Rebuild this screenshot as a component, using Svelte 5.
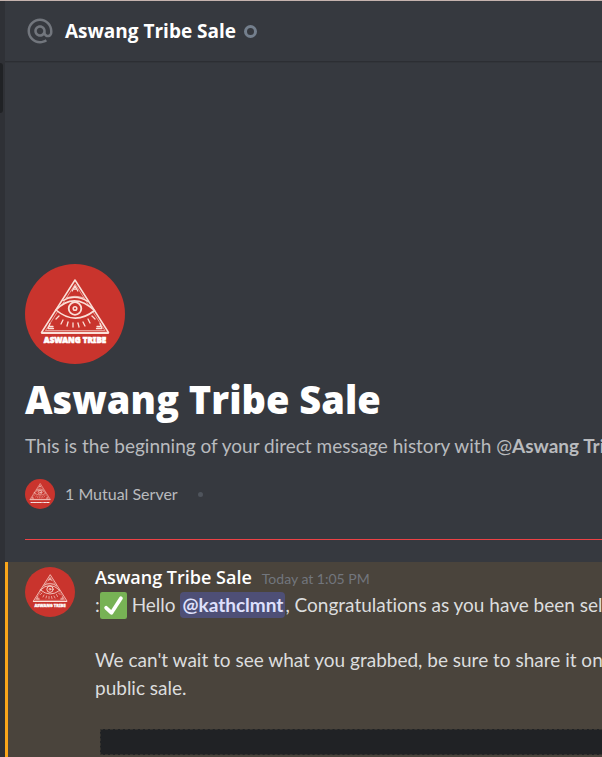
<script lang="ts">
	interface Message {
		author: string;
		time: string;
		mention: string;
	}

	const user = 'Aswang Tribe Sale';
	const mutualServers = 1;
	const message: Message = {
		author: user,
		time: 'Today at 1:05 PM',
		mention: '@kathclmnt'
	};

	// x1, y1, x2, y2 of each lower lash
	const lashes = [
		[34, 52, 31, 55],
		[38, 56, 36, 60],
		[43, 58, 42, 62],
		[48, 59, 48, 63],
		[53, 59, 54, 63],
		[58, 58, 60, 62],
		[63, 55, 65, 59],
		[67, 52, 70, 55]
	];
</script>

{#snippet logo()}
	<svg class="logo" viewBox="0 0 100 100" aria-hidden="true">
		<circle cx="50" cy="50" r="50" fill="#c9342d" />
		<g fill="none" stroke="#fbe0d8" stroke-width="1.3" stroke-linejoin="round" stroke-linecap="round">
			<path d="M50 16 16.5 68.5h67z" stroke-width="1.5" />
			<path d="M50 20.5 20.5 66.5h59z" stroke-width="0.6" />
			<path d="M17 69h66" stroke-width="2" />
			<path d="M47.2 27 50 21.8 52.8 27M48.2 25.2h3.6" />
			<path d="M38 36.5Q50 29.5 63 37.5" />
			<path d="M41 34Q50 30.5 59 34" stroke-width="0.7" />
			<path d="M31 46Q49 27.5 69.5 46.5Q50 62 31 46Z" fill="#c9342d" stroke-width="1.6" />
			<circle cx="50" cy="44.5" r="6.3" stroke-width="1.8" />
			<circle cx="50" cy="44.5" r="1.8" stroke-width="1.5" />
			{#each lashes as [x1, y1, x2, y2]}
				<path d="M{x1} {y1}L{x2} {y2}" />
			{/each}
			<path d="M25 59.5 23 64.5h5.5M25 62.5h3" />
			<path d="M75 59.5 77 64.5h-5.5M75 62.5h-3" />
		</g>
		<text x="50" y="79" text-anchor="middle">ASWANG TRIBE</text>
	</svg>
{/snippet}

<div class="app">
	<aside class="sidebar"><div class="scroll-thumb"></div></aside>
	<main class="chat">
		<header class="topbar">
			<svg class="at" viewBox="0 0 24 24" aria-hidden="true">
				<path
					fill="currentColor"
					d="M12 2C6.486 2 2 6.486 2 12C2 17.515 6.486 22 12 22C14.039 22 15.993 21.398 17.652 20.259L16.521 18.611C15.195 19.519 13.633 20 12 20C7.589 20 4 16.411 4 12C4 7.589 7.589 4 12 4C16.411 4 20 7.589 20 12V12.782C20 14.17 19.402 15 18.4 15L18.398 15.018C18.338 15.005 18.273 15 18.209 15H18C17.437 15 16.6 14.182 16.6 13.631V12C16.6 9.464 14.537 7.4 12 7.4C9.463 7.4 7.4 9.463 7.4 12C7.4 14.537 9.463 16.6 12 16.6C13.234 16.6 14.35 16.106 15.177 15.313C15.826 16.269 16.93 17 18 17L18.002 16.981C18.064 16.994 18.129 17 18.195 17H18.4C20.552 17 22 15.306 22 12.782V12C22 6.486 17.514 2 12 2ZM12 14.599C10.566 14.599 9.4 13.433 9.4 11.999C9.4 10.565 10.566 9.399 12 9.399C13.434 9.399 14.6 10.565 14.6 11.999C14.6 13.433 13.434 14.599 12 14.599Z"
				/>
			</svg>
			<span class="topbar-name">{user}</span>
			<span class="status" role="img" aria-label="Offline"></span>
		</header>

		<section class="intro">
			<div class="avatar large">{@render logo()}</div>
			<h1>{user}</h1>
			<p class="history">
				This is the beginning of your direct message history with @<strong>{user}</strong>.
			</p>
			<div class="mutual">
				<div class="avatar small">{@render logo()}</div>
				<span>{mutualServers} Mutual Server</span>
				<span class="dot"></span>
			</div>
		</section>

		<hr />

		<article class="message">
			<div class="avatar medium">{@render logo()}</div>
			<div class="body">
				<div class="meta">
					<h2>{message.author}</h2>
					<time>{message.time}</time>
				</div>
				<p>
					:<svg class="emoji" viewBox="0 0 36 36" role="img" aria-label="check mark">
						<rect width="36" height="36" rx="3" fill="#77b255" />
						<path
							fill="#fff"
							d="M29.28 6.362a2.502 2.502 0 0 0-3.458.736L14.936 23.877l-5.029-4.65a2.5 2.5 0 1 0-3.394 3.671l7.209 6.666c.48.445 1.09.665 1.696.665.673 0 1.534-.282 2.099-1.139.332-.506 12.5-19.27 12.5-19.27a2.5 2.5 0 0 0-.737-3.458z"
						/>
					</svg>
					Hello <button class="mention">{message.mention}</button>, Congratulations as you have been selected
				</p>
				<p class="gap">
					We can't wait to see what you grabbed, be sure to share it on<br />
					public sale.
				</p>
				<div class="redacted"></div>
			</div>
		</article>
	</main>
</div>

<style>
	:global(body) {
		margin: 0;
		background: #36393f;
	}
	.app {
		display: flex;
		min-height: 100vh;
		box-sizing: border-box;
		border-top: 1px solid #c5b3ae;
		overflow: hidden;
		background: #36393f;
		color: #dcddde;
		font-family: Lato, 'Open Sans', sans-serif;
		font-size: 19px;
		font-variant-ligatures: none;
		line-height: 28px;
		white-space: nowrap;
	}
	h1,
	h2,
	p {
		margin: 0;
	}
	h1,
	h2,
	.topbar-name {
		color: #fff;
		font-family: 'Open Sans', 'Noto Sans', sans-serif;
	}
	.sidebar {
		flex: none;
		width: 5px;
		background: #2f3136;
	}
	.scroll-thumb {
		width: 3px;
		height: 50px;
		margin-top: 62px;
		border-radius: 0 3px 3px 0;
		background: #202225;
	}
	.chat {
		flex: 1;
		min-width: 0;
		overflow: hidden;
	}
	.topbar {
		display: flex;
		align-items: center;
		height: 60px;
		padding: 0 20px;
		border-bottom: 1px solid #2c2e33;
		box-shadow: 0 1px 0 #32353a;
	}
	.at {
		width: 30px;
		height: 30px;
		margin-right: 10px;
		color: #72767d;
	}
	.topbar-name {
		font-size: 19px;
		font-weight: 700;
	}
	.status {
		box-sizing: border-box;
		width: 13px;
		height: 13px;
		margin-left: 8px;
		border: 3px solid #747f8d;
		border-radius: 50%;
	}
	.intro {
		padding: 202px 20px 0;
	}
	.avatar {
		flex: none;
	}
	.logo {
		display: block;
		width: 100%;
	}
	.logo text {
		fill: #fff;
		stroke: #fff;
		stroke-width: 0.6;
		font-family: 'Noto Sans', sans-serif;
		font-size: 8px;
		font-weight: 900;
	}
	.large {
		width: 100px;
	}
	.medium {
		width: 50px;
	}
	.small {
		width: 30px;
	}
	h1 {
		margin-top: 10px;
		font-size: 38px;
		font-weight: 800;
		line-height: 50px;
	}
	.history {
		margin-top: 8px;
		color: #b9bbbe;
	}
	.mutual {
		display: flex;
		align-items: center;
		gap: 10px;
		margin-top: 19px;
		color: #b9bbbe;
		font-size: 16px;
	}
	.dot {
		width: 5px;
		height: 5px;
		margin-left: 10px;
		border-radius: 50%;
		background: #4f545c;
	}
	hr {
		height: 1px;
		margin: 30px 0 22px 20px;
		border: 0;
		background: #ed4245;
	}
	.message {
		display: flex;
		gap: 20px;
		padding: 5px 0 2px 17px;
		border-left: 3px solid #faa61a;
		background: #4a443c;
	}
	.body {
		flex: 1;
		min-width: 0;
	}
	.meta {
		display: flex;
		align-items: baseline;
		gap: 10px;
		height: 24px;
		line-height: 20px;
	}
	h2 {
		font-size: 18px;
		font-weight: 600;
	}
	time {
		color: #72767d;
		font-size: 14px;
	}
	.emoji {
		width: 27px;
		height: 27px;
		vertical-align: -7px;
	}
	.mention {
		padding: 0 2px;
		border: 0;
		border-radius: 4px;
		background: #4e4f76;
		color: #dee0fc;
		font: inherit;
		font-weight: 700;
		line-height: 26px;
		cursor: pointer;
	}
	.gap {
		margin-top: 27px;
	}
	.redacted {
		height: 24px;
		margin: 27px 0 0 5px;
		border: 1px dashed #35332f;
		border-right: 0;
		background: #202225;
	}
</style>
